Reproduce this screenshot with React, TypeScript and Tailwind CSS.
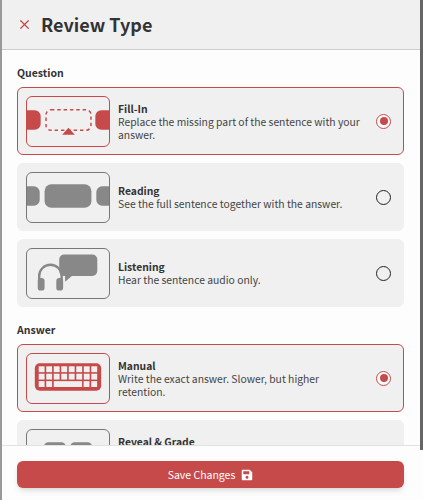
import { X } from 'lucide-react';
import { FaSave } from 'react-icons/fa';
import type { ReactNode } from 'react';

const RED = '#c74a4a';
const GRAY = '#888888';

function FillInArt() {
  return (
    <svg width="84" height="52" viewBox="0 0 84 52" fill="none">
      <path d="M0 15h8a6 6 0 0 1 6 6v8a6 6 0 0 1-6 6H0z" fill={RED} />
      <path d="M84 15H76a6 6 0 0 0-6 6v8a6 6 0 0 0 6 6h8z" fill={RED} />
      <rect x="19.5" y="14.5" width="46" height="21" rx="5" stroke={RED} strokeWidth="1.5" strokeDasharray="3.5 3" />
      <path d="M42.5 33l6.5 7H36z" fill={RED} />
    </svg>
  );
}

function ReadingArt() {
  return (
    <svg width="84" height="52" viewBox="0 0 84 52" fill="none">
      <path d="M0 15h7a6 6 0 0 1 6 6v8a6 6 0 0 1-6 6H0z" fill={GRAY} />
      <path d="M84 15H77a6 6 0 0 0-6 6v8a6 6 0 0 0 6 6h7z" fill={GRAY} />
      <rect x="18" y="13" width="48" height="24" rx="7" fill={GRAY} />
    </svg>
  );
}

function ListeningArt() {
  return (
    <svg width="84" height="52" viewBox="0 0 84 52" fill="none">
      <path d="M38 7h29a5 5 0 0 1 5 5v12a5 5 0 0 1-5 5H46l-7 6v-6a5 5 0 0 1-6-5V12a5 5 0 0 1 5-5z" fill={GRAY} />
      <path d="M12.5 38V29a11.5 11.5 0 0 1 23 0v9" stroke={GRAY} strokeWidth="2.5" />
      <rect x="11" y="31" width="7" height="13" rx="3" fill={GRAY} />
      <rect x="30" y="31" width="7" height="13" rx="3" fill={GRAY} />
    </svg>
  );
}

function KeyboardArt() {
  const keys: ReactNode[] = [];
  for (let row = 0; row < 2; row++) {
    for (let col = 0; col < 8; col++) {
      keys.push(<rect key={`${row}-${col}`} x={12 + col * 7.7} y={14 + row * 7.6} width="6" height="6" fill="#f0f0f0" />);
    }
  }
  return (
    <svg width="84" height="52" viewBox="0 0 84 52" fill="none">
      <rect x="8" y="11" width="68" height="28" rx="5" fill={RED} />
      {keys}
      <rect x="12" y="29.2" width="6" height="6" fill="#f0f0f0" />
      <rect x="19.7" y="29.2" width="6" height="6" fill="#f0f0f0" />
      <rect x="27.4" y="29.2" width="29" height="6" fill="#f0f0f0" />
      <rect x="58" y="29.2" width="6" height="6" fill="#f0f0f0" />
      <rect x="65.8" y="29.2" width="6" height="6" fill="#f0f0f0" />
    </svg>
  );
}

function RevealArt() {
  return (
    <svg width="84" height="52" viewBox="0 0 84 52" fill="none">
      <rect x="17" y="14" width="23" height="24" rx="5" fill={GRAY} />
      <rect x="44" y="14" width="23" height="24" rx="5" fill={GRAY} />
    </svg>
  );
}

interface OptionProps {
  art: ReactNode;
  title: string;
  description: string;
  selected?: boolean;
}

function Option({ art, title, description, selected }: OptionProps) {
  return (
    <div
      className={`flex h-[68px] shrink-0 items-center rounded-md border bg-[#f0f0f0] pl-[8px] ${
        selected ? 'border-[#c74a4a]' : 'border-[#f0f0f0]'
      }`}
    >
      <div
        className={`flex h-[51px] w-[84px] shrink-0 items-center justify-center overflow-hidden rounded-md border bg-[#f0f0f0] ${
          selected ? 'border-[#c74a4a]' : 'border-[#777777]'
        }`}
      >
        {art}
      </div>
      <div className="ml-[8px] w-[246px] shrink-0 text-[10.35px] leading-[13px] text-[#444444]">
        <div className="font-bold text-[#333333]">{title}</div>
        <div>{description}</div>
      </div>
      <div className="ml-[12px] shrink-0">
        {selected ? (
          <div className="flex h-[15px] w-[15px] items-center justify-center rounded-full border-[1.5px] border-[#c74a4a] bg-white">
            <div className="h-[8px] w-[8px] rounded-full bg-[#c74a4a]" />
          </div>
        ) : (
          <div className="h-[15px] w-[15px] rounded-full border-[1.5px] border-[#222222]" />
        )}
      </div>
    </div>
  );
}

export default function App() {
  return (
    <div className="relative h-[500px] w-[423px] overflow-hidden bg-[#fdfdfd] font-['Noto_Sans_CJK_JP','Noto_Sans',sans-serif]">
      <div className="ml-[2px] mr-[3px] flex h-full flex-col">
        <header className="flex h-[50px] shrink-0 items-center gap-[9px] border-b border-[#cccccc] bg-[#f0f0f0] pl-[15px]">
          <X size={15} strokeWidth={2} color="#c74a4a" />
          <h1 className="text-[18px] font-bold text-[#333333]">Review Type</h1>
        </header>
        <div className="flex min-h-0 flex-1 flex-col overflow-hidden pl-[15px] pr-[16px]">
          <h2 className="mt-[15px] shrink-0 text-[10.5px] leading-[16px] font-bold text-[#333333]">Question</h2>
          <div className="mt-[6px] flex flex-col gap-[8px]">
            <Option
              selected
              art={<FillInArt />}
              title="Fill-In"
              description="Replace the missing part of the sentence with your answer."
            />
            <Option art={<ReadingArt />} title="Reading" description="See the full sentence together with the answer." />
            <Option art={<ListeningArt />} title="Listening" description="Hear the sentence audio only." />
          </div>
          <h2 className="mt-[15px] shrink-0 text-[10.5px] leading-[16px] font-bold text-[#333333]">Answer</h2>
          <div className="mt-[6px] flex flex-col gap-[8px]">
            <Option
              selected
              art={<KeyboardArt />}
              title="Manual"
              description="Write the exact answer. Slower, but higher retention."
            />
            <Option
              art={<RevealArt />}
              title="Reveal & Grade"
              description="See the answer, then grade yourself. Faster, but lower retention."
            />
          </div>
        </div>
      </div>
      <div className="absolute bottom-0 left-[2px] right-[3px] h-[55px] border-t border-[#e2e2e2] bg-[#fdfdfd] pl-[15px] pr-[16px] pt-[15px]">
        <button className="flex h-[27px] w-full items-center justify-center gap-[6px] rounded-md bg-[#c74a4a] text-[10.5px] text-white shadow-md">
          Save Changes
          <FaSave size={12} />
        </button>
      </div>
      <div className="absolute left-0 top-0 h-full w-[2px] bg-[#999999]" />
      <div className="absolute right-0 top-0 h-[450px] w-[3px] bg-[#666666]" />
    </div>
  );
}
